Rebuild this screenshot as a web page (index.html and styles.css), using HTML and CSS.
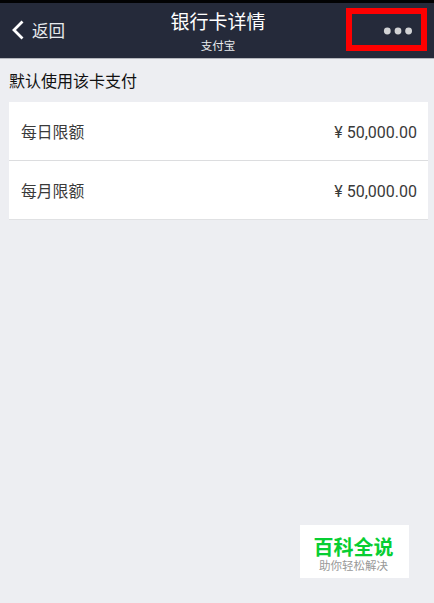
FILE: index.html
```
<!DOCTYPE html>
<html lang="zh-CN">
<head>
    <meta charset="UTF-8">
    <meta name="viewport" content="width=device-width, initial-scale=1.0">
    <title>银行卡详情</title>
    <link rel="stylesheet" href="styles.css">
</head>
<body>
    <header class="header">
        <a class="back">
            <svg width="12" height="20" viewBox="0 0 12 20" fill="none" stroke="#fff" stroke-width="2.8">
                <path d="M10.500 1.500L2 10l8.500 8.500"/>
            </svg>
            <span>返回</span>
        </a>
        <div class="title">
            <h1>银行卡详情</h1>
            <p>支付宝</p>
        </div>
        <div class="more">
            <svg width="30" height="8" viewBox="0 0 30 8" fill="#d2d3d5">
                <circle cx="4.300" cy="4" r="3.400"/>
                <circle cx="15" cy="4" r="3.400"/>
                <circle cx="25.600" cy="4" r="3.400"/>
            </svg>
        </div>
    </header>

    <main class="content">
        <h2>默认使用该卡支付</h2>
        <ul class="limits">
            <li><span class="label">每日限额</span><span class="amount"><span class="yen">¥</span>50,000.00</span></li>
            <li><span class="label">每月限额</span><span class="amount"><span class="yen">¥</span>50,000.00</span></li>
        </ul>
    </main>

    <div class="watermark">
        <strong>百科全说</strong>
        <span>助你轻松解决</span>
    </div>
</body>
</html>
```
FILE: styles.css
```
* {
    margin: 0;
    padding: 0;
    box-sizing: border-box;
}

body {
    font-family: Roboto, "Noto Sans CJK SC", sans-serif;
    height: 603px;
    background: #edeef2;
    color: #111;
    overflow: hidden;
    position: relative;
}

.header {
    height: 59px;
    display: grid;
    grid-template-columns: 1fr auto 1fr;
    background: #252a3a;
    border-top: 3px solid #020203;
    border-bottom: 1px solid #b4b6bc;
    color: #fff;
}

.back {
    display: flex;
    align-items: center;
    gap: 8px;
    padding-left: 12px;
    height: 54px;
    font-size: 16.5px;
    color: #e8eaee;
}

.title {
    text-align: center;
    padding: 6px 0 0 2px;
}

.title h1 {
    font-size: 19px;
    font-weight: 400;
    line-height: 27px;
}

.title p {
    font-size: 11.5px;
    line-height: 20px;
    color: #e8eaee;
}

.more {
    display: flex;
    align-items: center;
    justify-content: flex-end;
    justify-self: end;
    width: 81px;
    height: 43px;
    margin: 5px 7px 0 0;
    padding: 2px 8px 0 0;
    border: 6px solid #fe0000;
}

.content {
    padding: 10px 6px 0 9px;
}

.content h2 {
    font-size: 16px;
    font-weight: 400;
    line-height: 26px;
}

.limits {
    list-style: none;
    margin-top: 7px;
    background: #fff;
    border-bottom: 1px solid #e0e1e3;
}

.limits li {
    display: flex;
    align-items: center;
    justify-content: space-between;
    height: 58px;
    padding: 2px 11px 0 12px;
    font-size: 16px;
    color: #3a3a3a;
}

.limits li + li {
    height: 59px;
    border-top: 1px solid #dcdddf;
}

.label {
    font-size: 15.8px;
    padding-bottom: 2px;
}

.yen {
    margin-right: 4px;
}

.watermark {
    position: absolute;
    left: 300px;
    top: 525px;
    width: 109px;
    height: 53px;
    padding: 10px 2px 0 0;
    background: #fff;
    text-align: center;
}

.watermark strong {
    display: block;
    font-size: 20px;
    font-weight: 700;
    line-height: 26px;
    color: #07ce32;
}

.watermark span {
    display: block;
    font-size: 11.5px;
    line-height: 11px;
    color: #999;
}
```
